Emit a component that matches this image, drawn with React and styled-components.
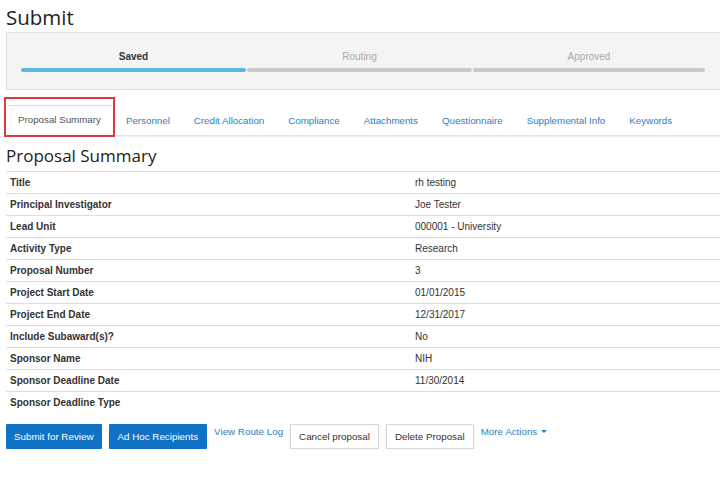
import styled, { createGlobalStyle } from "styled-components";

const GlobalStyle = createGlobalStyle`
  body {
    margin: 0;
    background: #fff;
    font-family: "Liberation Sans", Arial, sans-serif;
    font-size: 10px;
    color: #333;
  }
`;

const steps = [
  { label: "Saved", done: true },
  { label: "Routing", done: false },
  { label: "Approved", done: false },
];

const tabs = [
  "Proposal Summary",
  "Personnel",
  "Credit Allocation",
  "Compliance",
  "Attachments",
  "Questionnaire",
  "Supplemental Info",
  "Keywords",
];

const rows = [
  ["Title", "rh testing"],
  ["Principal Investigator", "Joe Tester"],
  ["Lead Unit", "000001 - University"],
  ["Activity Type", "Research"],
  ["Proposal Number", "3"],
  ["Project Start Date", "01/01/2015"],
  ["Project End Date", "12/31/2017"],
  ["Include Subaward(s)?", "No"],
  ["Sponsor Name", "NIH"],
  ["Sponsor Deadline Date", "11/30/2014"],
  ["Sponsor Deadline Type", ""],
];

export default function App() {
  return (
    <Page>
      <GlobalStyle />
      <Title>Submit</Title>

      <Progress>
        {steps.map((s) => (
          <Step key={s.label}>
            <StepLabel done={s.done}>{s.label}</StepLabel>
            <StepBar done={s.done} />
          </Step>
        ))}
      </Progress>

      <TabBar>
        {tabs.map((t, i) =>
          i === 0 ? (
            <Highlight key={t}>
              <ActiveTab>{t}</ActiveTab>
            </Highlight>
          ) : (
            <Tab key={t}>{t}</Tab>
          )
        )}
      </TabBar>

      <SectionTitle>Proposal Summary</SectionTitle>

      <Table>
        {rows.map(([k, v]) => (
          <Row key={k}>
            <Label>{k}</Label>
            <Value>{v}</Value>
          </Row>
        ))}
      </Table>

      <Actions>
        <PrimaryButton>Submit for Review</PrimaryButton>
        <PrimaryButton>Ad Hoc Recipients</PrimaryButton>
        <LinkAction>View Route Log</LinkAction>
        <PlainButton>Cancel proposal</PlainButton>
        <PlainButton>Delete Proposal</PlainButton>
        <LinkAction>
          More Actions <Caret />
        </LinkAction>
      </Actions>
    </Page>
  );
}

const Page = styled.div`
  padding: 0 0 0 6px;
  width: 714px;
`;

const Title = styled.h1`
  margin: 0;
  padding-top: 3px;
  height: 29px;
  font-family: "Open Sans", sans-serif;
  font-weight: 400;
  font-size: 20.5px;
  line-height: 29px;
  color: #222;
`;

const Progress = styled.div`
  box-sizing: border-box;
  height: 58px;
  background: #f4f4f4;
  border: 1px solid #e2e2e2;
  border-right: none;
  padding: 17px 0 0 14px;
  display: grid;
  grid-template-columns: 225px 225px 232px;
  gap: 1px;
`;

const Step = styled.div`
  display: flex;
  flex-direction: column;
  align-items: center;
`;

const StepLabel = styled.div`
  font-size: 10px;
  line-height: 14px;
  font-weight: ${(p) => (p.done ? 700 : 400)};
  color: ${(p) => (p.done ? "#333" : "#aaa")};
`;

const StepBar = styled.div`
  margin-top: 4px;
  width: 100%;
  height: 4px;
  border-radius: 2px;
  background: ${(p) => (p.done ? "#58b8dd" : "#c9c9c9")};
`;

const TabBar = styled.div`
  margin-top: 7px;
  display: flex;
  align-items: flex-end;
  border-bottom: 1px solid #e6e6e6;
  box-shadow: 0 1px 1px rgba(0, 0, 0, 0.05);
  margin-left: -2px;
`;

const Tab = styled.div`
  padding: 0 12px;
  height: 28px;
  line-height: 28px;
  color: #2f7ec2;
  font-size: 9.75px;
  white-space: nowrap;
  &:nth-child(2) {
    padding-left: 11px;
  }
`;

const Highlight = styled.div`
  box-sizing: border-box;
  border: 2px solid #e0393e;
  padding: 6px 1px 0 1px;
  margin-bottom: -2px;
`;

const ActiveTab = styled.div`
  border-top: 1px solid #e2e2e2;
  padding: 0 11px 0 11px;
  height: 29px;
  line-height: 28px;
  color: #555;
  font-size: 9.75px;
  white-space: nowrap;
`;

const SectionTitle = styled.h2`
  margin: 0;
  height: 35px;
  line-height: 40px;
  font-family: "Open Sans", sans-serif;
  font-weight: 400;
  font-size: 17px;
  color: #222;
`;

const Table = styled.div`
  display: flex;
  flex-direction: column;
`;

const Row = styled.div`
  display: grid;
  grid-template-columns: 405px 1fr;
  height: 22px;
  box-sizing: border-box;
  border-top: 1px solid #dedede;
  align-items: center;
`;

const Label = styled.div`
  padding-left: 4px;
  font-weight: 700;
  color: #333;
`;

const Value = styled.div`
  padding-left: 4px;
  color: #333;
`;

const Actions = styled.div`
  margin-top: 11px;
  display: flex;
  align-items: flex-start;
  gap: 7px;
`;

const PrimaryButton = styled.button`
  font-family: "Liberation Sans", Arial, sans-serif;
  font-size: 9.8px;
  height: 25px;
  padding: 0 8px;
  border: none;
  border-radius: 1px;
  background: #0f72c4;
  color: #fff;
  &:nth-child(2) {
    padding: 0 9px;
  }
`;

const PlainButton = styled.button`
  font-family: "Liberation Sans", Arial, sans-serif;
  font-size: 9.8px;
  height: 25px;
  padding: 0 8px;
  border: 1px solid #d6d6d6;
  border-radius: 1px;
  background: #fff;
  color: #333;
  box-shadow: 0 1px 2px rgba(0, 0, 0, 0.12);
`;

const LinkAction = styled.span`
  padding-top: 2px;
  color: #2f7ec2;
  font-size: 9.8px;
  white-space: nowrap;
  display: inline-flex;
  align-items: center;
  gap: 4px;
`;

const Caret = styled.span`
  width: 0;
  height: 0;
  border-left: 3px solid transparent;
  border-right: 3px solid transparent;
  border-top: 3px solid #2f7ec2;
`;
